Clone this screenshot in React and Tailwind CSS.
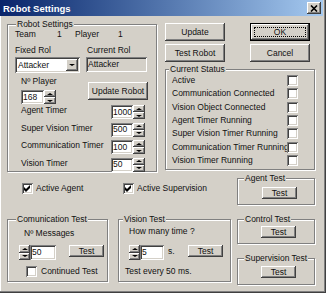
import React from "react";

const raised =
  "bg-[#d4d0c8] shadow-[inset_-1px_-1px_#404040,inset_1px_1px_#fff,inset_-2px_-2px_#808080]";
const sunken =
  "shadow-[inset_1px_1px_#808080,inset_-1px_-1px_#fff,inset_2px_2px_#404040,inset_-2px_-2px_#d4d0c8]";

const Up = () => (
  <span className="block w-0 h-0 border-x-[3px] border-x-transparent border-b-[2px] border-b-black" />
);
const Down = () => (
  <span className="block w-0 h-0 border-x-[3px] border-x-transparent border-t-[2px] border-t-black" />
);

const Btn = ({ children, className = "" }) => (
  <button
    type="button"
    className={`${raised} flex items-center justify-center leading-none ${className}`}
  >
    {children}
  </button>
);

const Group = ({ title, className = "", legend = "ml-[6px]", children }) => (
  <fieldset
    className={`min-w-0 border border-[#808080] shadow-[1px_1px_#fff,inset_1px_1px_#fff] ${className}`}
  >
    <legend className={`${legend} px-[1px] leading-[10px] bg-[#d4d0c8]`}>{title}</legend>
    {children}
  </fieldset>
);

const Spin = ({ className = "" }) => (
  <div className={`flex flex-col ${className}`}>
    <div className={`${raised} flex-1 flex items-center justify-center`}>
      <Up />
    </div>
    <div className={`${raised} flex-1 flex items-center justify-center`}>
      <Down />
    </div>
  </div>
);

const Field = ({ value, className = "", bg = "bg-white" }) => (
  <div className={`${sunken} ${bg} flex items-center pl-[2px] ${className}`}>{value}</div>
);

const Check = ({ checked }) => (
  <span className={`${sunken} bg-white w-[11px] h-[11px] shrink-0 flex items-center justify-center`}>
    {checked && (
      <svg width="7" height="7" viewBox="0 0 7 7">
        <polygon points="0,2 2,4 6,0 6,3 2,7 0,5" fill="#000" />
      </svg>
    )}
  </span>
);

// spinner with arrows on the right, like the timers
const SpinRight = ({ value, w }) => (
  <div className="flex h-[14px]">
    <Field value={value} className={w} />
    <Spin className="w-[12px]" />
  </div>
);

const status = [
  "Active",
  "Communication Connected",
  "Vision Object Connected",
  "Agent Timer Running",
  "Super Vision Timer Running",
  "Communication Timer Running",
  "Vision Timer Running",
];

const timers = [
  ["Agent Timer", "1000"],
  ["Super Vision Timer", "500"],
  ["Communication Timer", "100"],
  ["Vision Timer", "50"],
];

export default function App() {
  return (
    <div className="w-[326px] h-[293px] overflow-hidden bg-[#d4d0c8] text-[#111] text-[8.5px] leading-[11px] font-['Liberation_Sans',Arial,sans-serif] shadow-[inset_-1px_-1px_#404040,inset_-2px_-2px_#808080,inset_1px_0_#fff]">
      {/* title bar */}
      <div className="w-[323px] h-[16px] flex items-center justify-between pl-[3px] pr-[2px] bg-gradient-to-r from-[#0a246a] to-[#a6caf0]">
        <span className="text-white font-bold text-[9.5px]">Robot Settings</span>
        <span className={`${raised} w-[14px] h-[12px] flex items-center justify-center`}>
          <svg width="8" height="7" viewBox="0 0 8 7">
            <path d="M1 0.5 L7 6.5 M7 0.5 L1 6.5" stroke="#000" strokeWidth="1.6" />
          </svg>
        </span>
      </div>

      {/* top row */}
      <div className="flex mt-[3px]">
        <Group title="Robot Settings" legend="ml-[8px]" className="ml-[7px] w-[150px] h-[153px]">
          <div className="flex pl-[7px]">
            <span className="w-[42px]">Team</span>
            <span className="w-[18px]">1</span>
            <span className="w-[43px]">Player</span>
            <span>1</span>
          </div>
          <div className="flex pl-[7px] mt-[5px]">
            <span className="w-[72px]">Fixed Rol</span>
            <span>Current Rol</span>
          </div>
          <div className="flex pl-[7px] mt-[1px]">
            <div className={`${sunken} bg-white w-[65px] h-[16px] flex items-center pl-[3px] pr-[2px]`}>
              <span className="flex-1">Attacker</span>
              <span className={`${raised} w-[12px] h-[12px] flex items-center justify-center`}>
                <Down />
              </span>
            </div>
            <Field value="Attacker" bg="bg-[#d4d0c8]" className="ml-[6px] w-[61px] h-[15px]" />
          </div>
          <div className="flex pl-[13px] mt-[3px]">
            <div className="flex flex-col w-[67px]">
              <span>Nº Player</span>
              <div className="flex h-[14px] mt-[3px]">
                <Field value="168" className="w-[23px]" />
                <Spin className="w-[12px]" />
              </div>
            </div>
            <Btn className="w-[60px] h-[18px] mt-[6px]">Update Robot</Btn>
          </div>
          <div className="flex flex-col gap-[3.6px] pl-[13px] mt-[1px]">
            {timers.map(([label, value]) => (
              <div key={label} className="flex items-center h-[14px]">
                <span className="w-[90px] -mt-[3px]">{label}</span>
                <SpinRight value={value} w="w-[22px]" />
              </div>
            ))}
          </div>
        </Group>

        <div className="ml-[8px] w-[150px] flex flex-col">
          <div className="flex gap-[25px] mt-[4px]">
            <Btn className="w-[60px] h-[18px]">Update</Btn>
            <div className="w-[60px] h-[18px] border border-black">
              <Btn className="w-full h-full">
                <span className="flex-1 self-stretch m-[3px] flex items-center justify-center border border-dotted border-black">
                  OK
                </span>
              </Btn>
            </div>
          </div>
          <div className="flex gap-[25px] mt-[3px]">
            <Btn className="w-[60px] h-[18px]">Test Robot</Btn>
            <Btn className="w-[60px] h-[18px]">Cancel</Btn>
          </div>
          <Group title="Current Status" legend="ml-[3px]" className="mt-[2px] w-[150px] h-[106px]">
            {status.map((s) => (
              <div key={s} className="flex items-center h-[13.33px] pl-[6px] pr-[16px]">
                <span className="flex-1 min-w-0 whitespace-nowrap">{s}</span>
                <Check />
              </div>
            ))}
          </Group>
        </div>
      </div>

      {/* active flags */}
      <div className="flex mt-[1px]">
        <label className="ml-[22px] mt-[10px] w-[101px] h-[11px] flex items-center gap-[3px]">
          <Check checked />
          <span>Active Agent</span>
        </label>
        <label className="mt-[10px] w-[114px] h-[11px] flex items-center gap-[3px]">
          <Check checked />
          <span>Active Supervision</span>
        </label>
        <Group title="Agent Test" className="w-[78px] h-[32px]">
          <Btn className="ml-[24px] mt-[4px] w-[35px] h-[12px]">Test</Btn>
        </Group>
      </div>

      {/* tests */}
      <div className="flex mt-[9px]">
        <Group title="Comunication Test" legend="ml-[8px]" className="ml-[7px] w-[101px] h-[68px]">
          <div className="ml-[16px] mt-[4px]">Nº Messages</div>
          <div className="flex items-start ml-[11px] mt-[6px] h-[15px]">
            <Spin className="w-[11px] h-[15px]" />
            <Field value="50" className="w-[26px] h-[15px]" />
            <Btn className="ml-[13px] w-[35px] h-[12px]">Test</Btn>
          </div>
          <label className="flex items-center gap-[4px] ml-[18px] mt-[6px]">
            <Check />
            <span>Continued Test</span>
          </label>
        </Group>

        <Group title="Vision Test" legend="ml-[4px]" className="ml-[10px] w-[113px] h-[68px]">
          <div className="ml-[10px] mt-[2px]">How many time ?</div>
          <div className="flex items-start ml-[10px] mt-[8px] h-[15px]">
            <Spin className="w-[11px] h-[15px]" />
            <Field value="5" className="w-[24px] h-[15px]" />
            <span className="ml-[4px] w-[20px] leading-[12px]">s.</span>
            <Btn className="w-[35px] h-[12px]">Test</Btn>
          </div>
          <div className="ml-[6px] mt-[6px]">Test every 50 ms.</div>
        </Group>

        <div className="ml-[6px] w-[78px] flex flex-col">
          <Group title="Control Test" className="w-[78px] h-[30px]">
            <Btn className="ml-[23px] mt-[2px] w-[35px] h-[12px]">Test</Btn>
          </Group>
          <Group title="Supervision Test" className="mt-[9px] w-[78px] h-[32px]">
            <Btn className="ml-[23px] mt-[3px] w-[35px] h-[12px]">Test</Btn>
          </Group>
        </div>
      </div>
    </div>
  );
}
